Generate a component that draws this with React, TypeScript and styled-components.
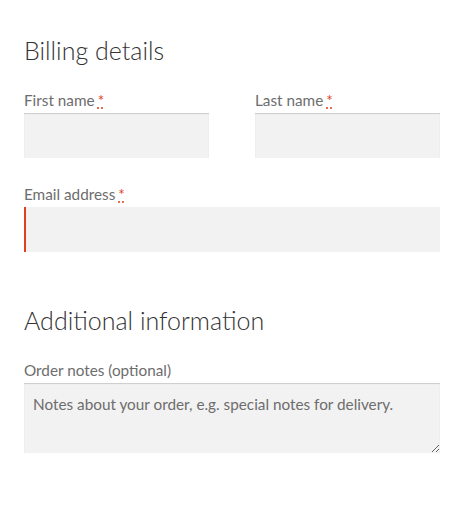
import styled, { createGlobalStyle } from 'styled-components'

const GlobalStyle = createGlobalStyle`
  html, body {
    margin: 0;
    padding: 0;
    background: #fff;
  }
  body {
    font-family: Lato, "Noto Sans", "Liberation Sans", sans-serif;
    color: #6d6d6d;
  }
  * { box-sizing: border-box; }
`;

const Page = styled.div`
  width: 416px;
  margin-left: 24px;
  padding-top: 35px;
`;

const Section = styled.section<{ $gap?: number }>`
  margin-top: ${props => props.$gap ?? 0}px;
`;

const Heading = styled.h3`
  margin: 0 0 22px;
  font-size: 25px;
  line-height: 31px;
  font-weight: 300;
  color: #333;
`;

const Row = styled.div`
  display: flex;
  justify-content: space-between;
  margin-bottom: 24px;
`;

const Field = styled.p<{ $wide?: boolean }>`
  margin: 0;
  width: ${props => (props.$wide ? '100%' : '185px')};
  display: flex;
  flex-direction: column;
`;

const Label = styled.label`
  font-size: 15.3px;
  line-height: 24px;
  margin-bottom: 1px;
  color: #6d6d6d;
`;

const Required = styled.abbr`
  color: #e2401c;
  margin-left: 3px;
  text-decoration: underline dotted;
  text-underline-offset: 2px;
  cursor: help;
`;

const Input = styled.input<{ $invalid?: boolean }>`
  height: 45px;
  width: 100%;
  border: 0;
  padding: 0 9px;
  background: #f2f2f2;
  font: inherit;
  font-size: 15.3px;
  color: #43454b;
  outline: none;
  box-shadow: ${props => (props.$invalid ? 'none' : 'inset 0 1px 1px rgba(0, 0, 0, 0.16)')};
  border-left: ${props => (props.$invalid ? '2px solid #e2401c' : '0')};
`;

const Notes = styled.textarea`
  height: 70px;
  width: 100%;
  border: 0;
  padding: 9px 9px;
  background: #f2f2f2;
  font: inherit;
  font-size: 15.3px;
  line-height: 24px;
  color: #43454b;
  outline: none;
  box-shadow: inset 0 1px 1px rgba(0, 0, 0, 0.16);
  resize: vertical;
  &::placeholder {
    color: #6d6d6d;
  }
`;

const App = () => {
  return (
    <>
      <GlobalStyle />
      <Page>
        <Section>
          <Heading>Billing details</Heading>
          <Row>
            <Field>
              <Label htmlFor="billing_first_name">
                First name<Required title="required">*</Required>
              </Label>
              <Input id="billing_first_name" type="text" />
            </Field>
            <Field>
              <Label htmlFor="billing_last_name">
                Last name<Required title="required">*</Required>
              </Label>
              <Input id="billing_last_name" type="text" />
            </Field>
          </Row>
          <Row>
            <Field $wide>
              <Label htmlFor="billing_email">
                Email address<Required title="required">*</Required>
              </Label>
              <Input id="billing_email" type="email" $invalid />
            </Field>
          </Row>
        </Section>
        <Section $gap={53}>
          <Heading>Additional information</Heading>
          <Field $wide>
            <Label htmlFor="order_comments">Order notes (optional)</Label>
            <Notes
              id="order_comments"
              placeholder="Notes about your order, e.g. special notes for delivery."
            />
          </Field>
        </Section>
      </Page>
    </>
  )
}

export default App
